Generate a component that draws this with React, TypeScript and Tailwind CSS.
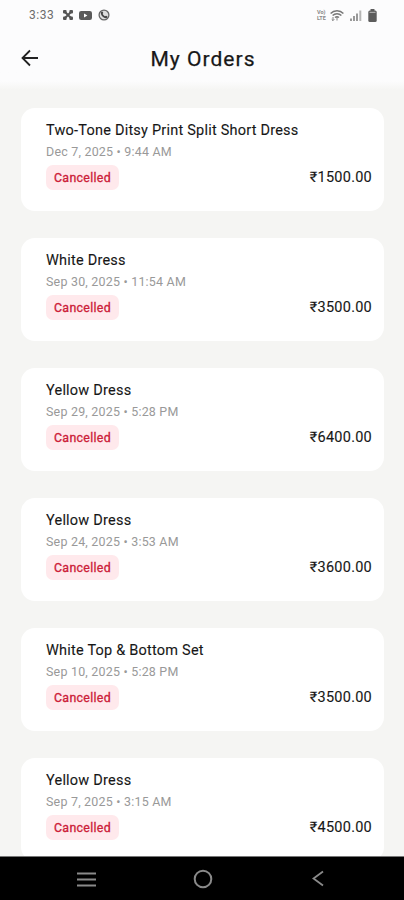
const orders = [
  { name: "Two-Tone Ditsy Print Split Short Dress", date: "Dec 7, 2025 • 9:44 AM", price: "₹1500.00" },
  { name: "White Dress", date: "Sep 30, 2025 • 11:54 AM", price: "₹3500.00" },
  { name: "Yellow Dress", date: "Sep 29, 2025 • 5:28 PM", price: "₹6400.00" },
  { name: "Yellow Dress", date: "Sep 24, 2025 • 3:53 AM", price: "₹3600.00" },
  { name: "White Top & Bottom Set", date: "Sep 10, 2025 • 5:28 PM", price: "₹3500.00" },
  { name: "Yellow Dress", date: "Sep 7, 2025 • 3:15 AM", price: "₹4500.00" },
];

function StatusBar() {
  return (
    <div className="flex h-[30px] items-center pl-[29px] pr-[27px] text-[#6c6c6c]">
      <span className="w-[33px] text-[12px] leading-[14px] tracking-[0.5px]">3:33</span>
      <svg className="h-[12px] w-[12px]" viewBox="0 0 12 12" fill="#555">
        <rect x="1" y="1" width="3.6" height="3.6" rx="1" />
        <rect x="7.4" y="1" width="3.6" height="3.6" rx="1" />
        <rect x="1" y="7.4" width="3.6" height="3.6" rx="1" />
        <rect x="7.4" y="7.4" width="3.6" height="3.6" rx="1" />
        <path d="M3 3l6 6M9 3L3 9" stroke="#555" strokeWidth="2" />
      </svg>
      <svg className="ml-[5px] h-[9px] w-[13px]" viewBox="0 0 13 9">
        <rect width="13" height="9" rx="2.2" fill="#5a5a5a" />
        <path d="M5 2.4v4.2l3.4-2.1z" fill="#fff" />
      </svg>
      <svg className="ml-[6px] h-[12px] w-[12px]" viewBox="0 0 12 12">
        <circle cx="6" cy="6" r="4.9" fill="#ddd" stroke="#666" strokeWidth="1.3" />
        <path d="M3.2 3c.9-1 1.5-.5 2 .8.2.5-.7.9-.5 1.3.5 1 1.2 1.7 2.2 2.2.4.2.8-.7 1.3-.5 1.3.5 1.8 1.1.8 2C6.5 10.500 1.5 5.500 3.200 3z" fill="#444" />
      </svg>
      <div className="ml-auto flex items-center">
        <div className="w-[11px] text-[5.5px] font-bold text-[#888]">
          <div className="h-[6px] leading-[6px]">Vo)</div>
          <div className="h-[6px] leading-[6px]">LTE</div>
        </div>
        <svg className="ml-[2px] h-[11px] w-[14px]" viewBox="0 0 14 11" fill="none" stroke="#777" strokeWidth="1.4">
          <path d="M.6 3.500C4-.2 10-.2 13.400 3.500M2.600 5.600c2.500-2.500 6.300-2.500 8.800 0M5 7.600c1.200-1.100 2.800-1.100 4 0" />
          <path d="M3 7v3.500M1.700 9.300L3 10.600l1.300-1.300M7 10.500V7" strokeWidth="0.9" />
        </svg>
        <svg className="ml-[6px] h-[11px] w-[12px]" viewBox="0 0 12 11" fill="#999">
          <rect x="0" y="8.500" width="2" height="2.500" />
          <rect x="3" y="6" width="2" height="5" />
          <rect x="6" y="3.500" width="2" height="7.500" />
          <rect x="9.300" y="0.500" width="2" height="10.500" fill="#b5b5b5" />
        </svg>
        <svg className="ml-[6px] h-[13px] w-[9px]" viewBox="0 0 9 13" fill="#5c5c5c">
          <rect x="2.500" y="0" width="4" height="2" rx=".5" />
          <rect x="0.300" y="1.400" width="8.400" height="11.600" rx="1.500" />
          <rect x="1.500" y="2.800" width="6" height="1.200" fill="#aaa" />
        </svg>
      </div>
    </div>
  );
}

function OrderCard({ name, date, price }: { name: string; date: string; price: string }) {
  return (
    <div className="h-[103px] shrink-0 rounded-[14px] bg-white pl-[25px] pr-3 pt-[14px]">
      <div className="whitespace-nowrap text-[14.5px] leading-[18px] tracking-[0.22px] text-[#171717] [-webkit-text-stroke:0.1px_#171717]">{name}</div>
      <div className="mt-[4px] whitespace-nowrap text-[12.45px] leading-[16px] tracking-[0.22px] text-[#999]">{date}</div>
      <div className="mt-[5px] flex items-center justify-between">
        <span className="flex h-[25px] w-[73px] items-center justify-center rounded-[7px] bg-[#ffe9ec] text-[12.4px] leading-[15px] tracking-[0.3px] text-[#cc2038] [-webkit-text-stroke:0.3px_#cc2038]">
          Cancelled
        </span>
        <span className="text-[14.5px] leading-[19px] tracking-[0.25px] text-[#171717] [-webkit-text-stroke:0.1px_#171717]">{price}</span>
      </div>
    </div>
  );
}

export default function App() {
  return (
    <div className="flex h-[900px] w-[404px] flex-col overflow-hidden bg-[#f5f5f3] font-[Roboto,'Noto_Sans',sans-serif]">
      <header className="h-[90px] shrink-0 bg-linear-to-b from-[#fcfcfd] from-90% to-[#f5f5f3]">
        <StatusBar />
        <div className="grid h-[58px] grid-cols-[1fr_auto_1fr] items-center pl-[21px] pr-[19px]">
          <svg className="h-[18px] w-[18px] -translate-y-px" viewBox="0 0 18 18" fill="none" stroke="#222" strokeWidth="1.800">
            <path d="M17 9H2M9 1.500L1.500 9l7.500 7.500" />
          </svg>
          <h1 className="text-[21px] font-normal leading-[28px] tracking-[1.05px] text-[#171717] [-webkit-text-stroke:0.25px_#171717]">My Orders</h1>
        </div>
      </header>
      <main className="flex min-h-0 flex-1 flex-col gap-[27px] overflow-hidden pl-[21px] pr-5 pt-[18px]">
        {orders.map((order, i) => (
          <OrderCard key={i} {...order} />
        ))}
      </main>
      <nav className="grid h-[44px] shrink-0 grid-cols-3 items-center justify-items-center border-t border-[#777] bg-black px-[28px]">
        <svg className="h-[15px] w-[19px] translate-y-px" viewBox="0 0 19 15" stroke="#8a8a8a" strokeWidth="2">
          <path d="M0 1.500h19M0 7.500h19M0 13.500h19" />
        </svg>
        <svg className="h-[20px] w-[20px] translate-x-px" viewBox="0 0 20 20" fill="none" stroke="#8a8a8a" strokeWidth="2">
          <circle cx="10" cy="10" r="8.300" />
        </svg>
        <svg className="h-[17px] w-[12px]" viewBox="0 0 12 17" fill="none" stroke="#8a8a8a" strokeWidth="1.800">
          <path d="M11 1.500L1.500 8.500l9.500 7" />
        </svg>
      </nav>
    </div>
  );
}
